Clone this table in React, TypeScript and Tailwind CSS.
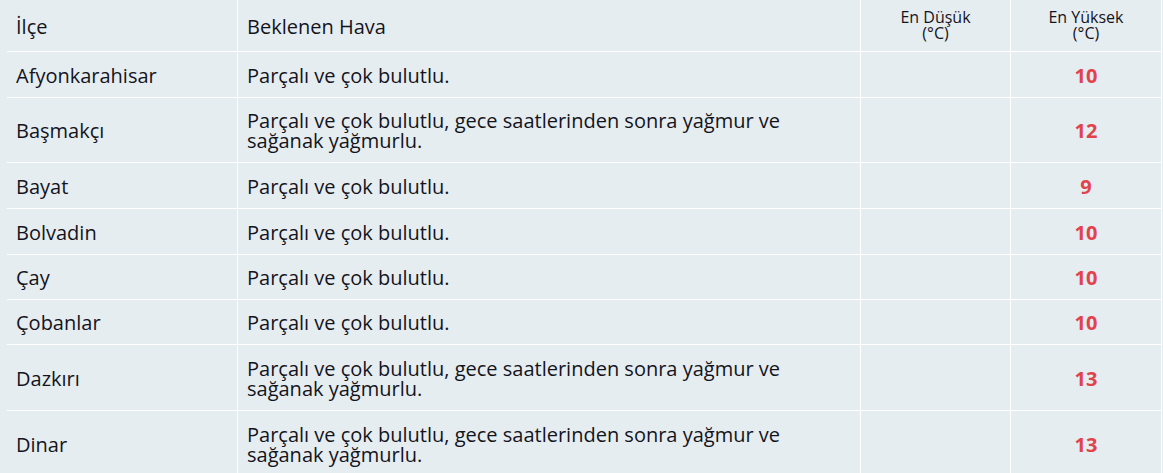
import React from "react";

type Row = { name: string; desc: string; max: string; h: string };

const rows: Row[] = [
  { name: "Afyonkarahisar", desc: "Parçalı ve çok bulutlu.", max: "10", h: "h-[46px]" },
  { name: "Başmakçı", desc: "Parçalı ve çok bulutlu, gece saatlerinden sonra yağmur ve sağanak yağmurlu.", max: "12", h: "h-[65px]" },
  { name: "Bayat", desc: "Parçalı ve çok bulutlu.", max: "9", h: "h-[46px]" },
  { name: "Bolvadin", desc: "Parçalı ve çok bulutlu.", max: "10", h: "h-[46px]" },
  { name: "Çay", desc: "Parçalı ve çok bulutlu.", max: "10", h: "h-[45px]" },
  { name: "Çobanlar", desc: "Parçalı ve çok bulutlu.", max: "10", h: "h-[45px]" },
  { name: "Dazkırı", desc: "Parçalı ve çok bulutlu, gece saatlerinden sonra yağmur ve sağanak yağmurlu.", max: "13", h: "h-[66px]" },
  { name: "Dinar", desc: "Parçalı ve çok bulutlu, gece saatlerinden sonra yağmur ve sağanak yağmurlu.", max: "13", h: "h-[66px]" },
];

export default function App() {
  return (
    <div
      className="w-[1163px] h-[473px] overflow-hidden bg-[#e6edf1] pl-[7px] text-[#14141c]"
      style={{ fontFamily: '"Open Sans", "Noto Sans", sans-serif' }}
    >
      <div className="flex h-[52px] border-b border-white w-[1155px]">
        <div className="w-[231px] border-r border-white flex items-center pl-[9px] pt-[2px] text-[20px]">İlçe</div>
        <div className="w-[623px] border-r border-white flex items-center pl-[9px] pt-[2px] text-[20px]">Beklenen Hava</div>
        <div className="w-[150px] border-r border-white flex flex-col items-center pt-[9px] text-[16px] leading-[16px]">
          <span>En Düşük</span>
          <span>(°C)</span>
        </div>
        <div className="w-[151px] border-r border-white flex flex-col items-center pt-[9px] text-[16px] leading-[16px]">
          <span>En Yüksek</span>
          <span>(°C)</span>
        </div>
      </div>
      {rows.map((r) => (
        <div key={r.name} className={`flex ${r.h} border-b border-white w-[1155px]`}>
          <div className="w-[231px] border-r border-white flex items-center pl-[9px] pt-[2px] text-[20px]">{r.name}</div>
          <div className="w-[623px] border-r border-white flex items-center pl-[9px] pr-[60px] pt-[2px] text-[20px] leading-[20px]">
            {r.desc}
          </div>
          <div className="w-[150px] border-r border-white" />
          <div className="w-[151px] border-r border-white flex items-center justify-center pt-[2px] text-[20px] font-bold text-[#e2434b]">
            {r.max}
          </div>
        </div>
      ))}
    </div>
  );
}
